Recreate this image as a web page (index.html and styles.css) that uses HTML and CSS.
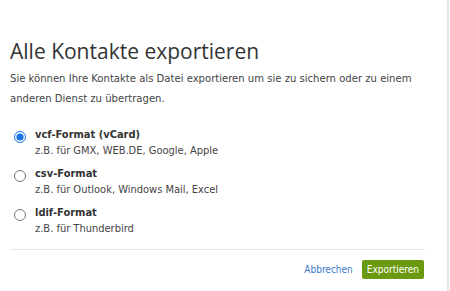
FILE: index.html
```html
<!DOCTYPE html>
<html lang="de">
<head>
<meta charset="utf-8">
<link rel="stylesheet" href="styles.css">
</head>
<body>
<div class="dialog">
  <h1 class="title">Alle Kontakte exportieren</h1>
  <p class="intro">Sie können Ihre Kontakte als Datei exportieren um sie zu sichern oder zu einem anderen Dienst zu übertragen.</p>
  <div class="options">
    <label class="option">
      <input type="radio" name="fmt" checked>
      <span class="option-text">
        <span class="option-name">vcf-Format (vCard)</span>
        <span class="option-hint">z.B. für GMX, WEB.DE, Google, Apple</span>
      </span>
    </label>
    <label class="option">
      <input type="radio" name="fmt">
      <span class="option-text">
        <span class="option-name">csv-Format</span>
        <span class="option-hint">z.B. für Outlook, Windows Mail, Excel</span>
      </span>
    </label>
    <label class="option">
      <input type="radio" name="fmt">
      <span class="option-text">
        <span class="option-name">ldif-Format</span>
        <span class="option-hint">z.B. für Thunderbird</span>
      </span>
    </label>
  </div>
  <div class="footer">
    <a class="cancel" href="#">Abbrechen</a>
    <button class="primary" type="button">Exportieren</button>
  </div>
</div>
</body>
</html>
```
FILE: styles.css
```css
html, body {
  margin: 0;
  padding: 0;
  background: #fff;
}
body {
  font-family: "DejaVu Sans Condensed", "DejaVu Sans", sans-serif;
  color: #333;
}
.dialog {
  width: 415px;
  height: 291px;
  box-sizing: border-box;
  padding: 37px 0 0 0;
  margin-left: 10px;
  position: relative;
}
.dialog::after {
  content: "";
  position: absolute;
  top: 0;
  right: -24px;
  width: 2px;
  height: 291px;
  background: #e6e6e6;
}
.title {
  margin: 0;
  font-family: "Open Sans", sans-serif;
  font-weight: 400;
  font-size: 21px;
  line-height: 29px;
  color: #333;
}
.intro {
  margin: 3px 0 0 0;
  font-size: 11.2px;
  line-height: 20px;
  color: #444;
}
.options {
  margin-top: 18px;
  display: flex;
  flex-direction: column;
  gap: 7px;
}
.option {
  display: flex;
  align-items: flex-start;
  gap: 9px;
}
.option input {
  margin: 4px 0 0 4px;
  width: 12px;
  height: 12px;
  accent-color: #1a73e8;
}
.option-text {
  display: flex;
  flex-direction: column;
  font-size: 11px;
  line-height: 16px;
}
.option-name {
  font-weight: bold;
  color: #333;
}
.option-hint {
  color: #444;
}
.footer {
  position: absolute;
  left: 0;
  right: 0;
  top: 249px;
  border-top: 1px solid #e8e8e8;
  display: flex;
  justify-content: flex-end;
  align-items: center;
  gap: 9px;
  padding-top: 10px;
}
.cancel {
  font-size: 10px;
  color: #3a77c9;
  text-decoration: none;
}
.primary {
  font-family: "DejaVu Sans Condensed", "DejaVu Sans", sans-serif;
  font-size: 10px;
  color: #fff;
  background: #6b990f;
  border: 0;
  border-radius: 2px;
  height: 19px;
  padding: 0 5px;
  margin-right: 1px;
}
```
